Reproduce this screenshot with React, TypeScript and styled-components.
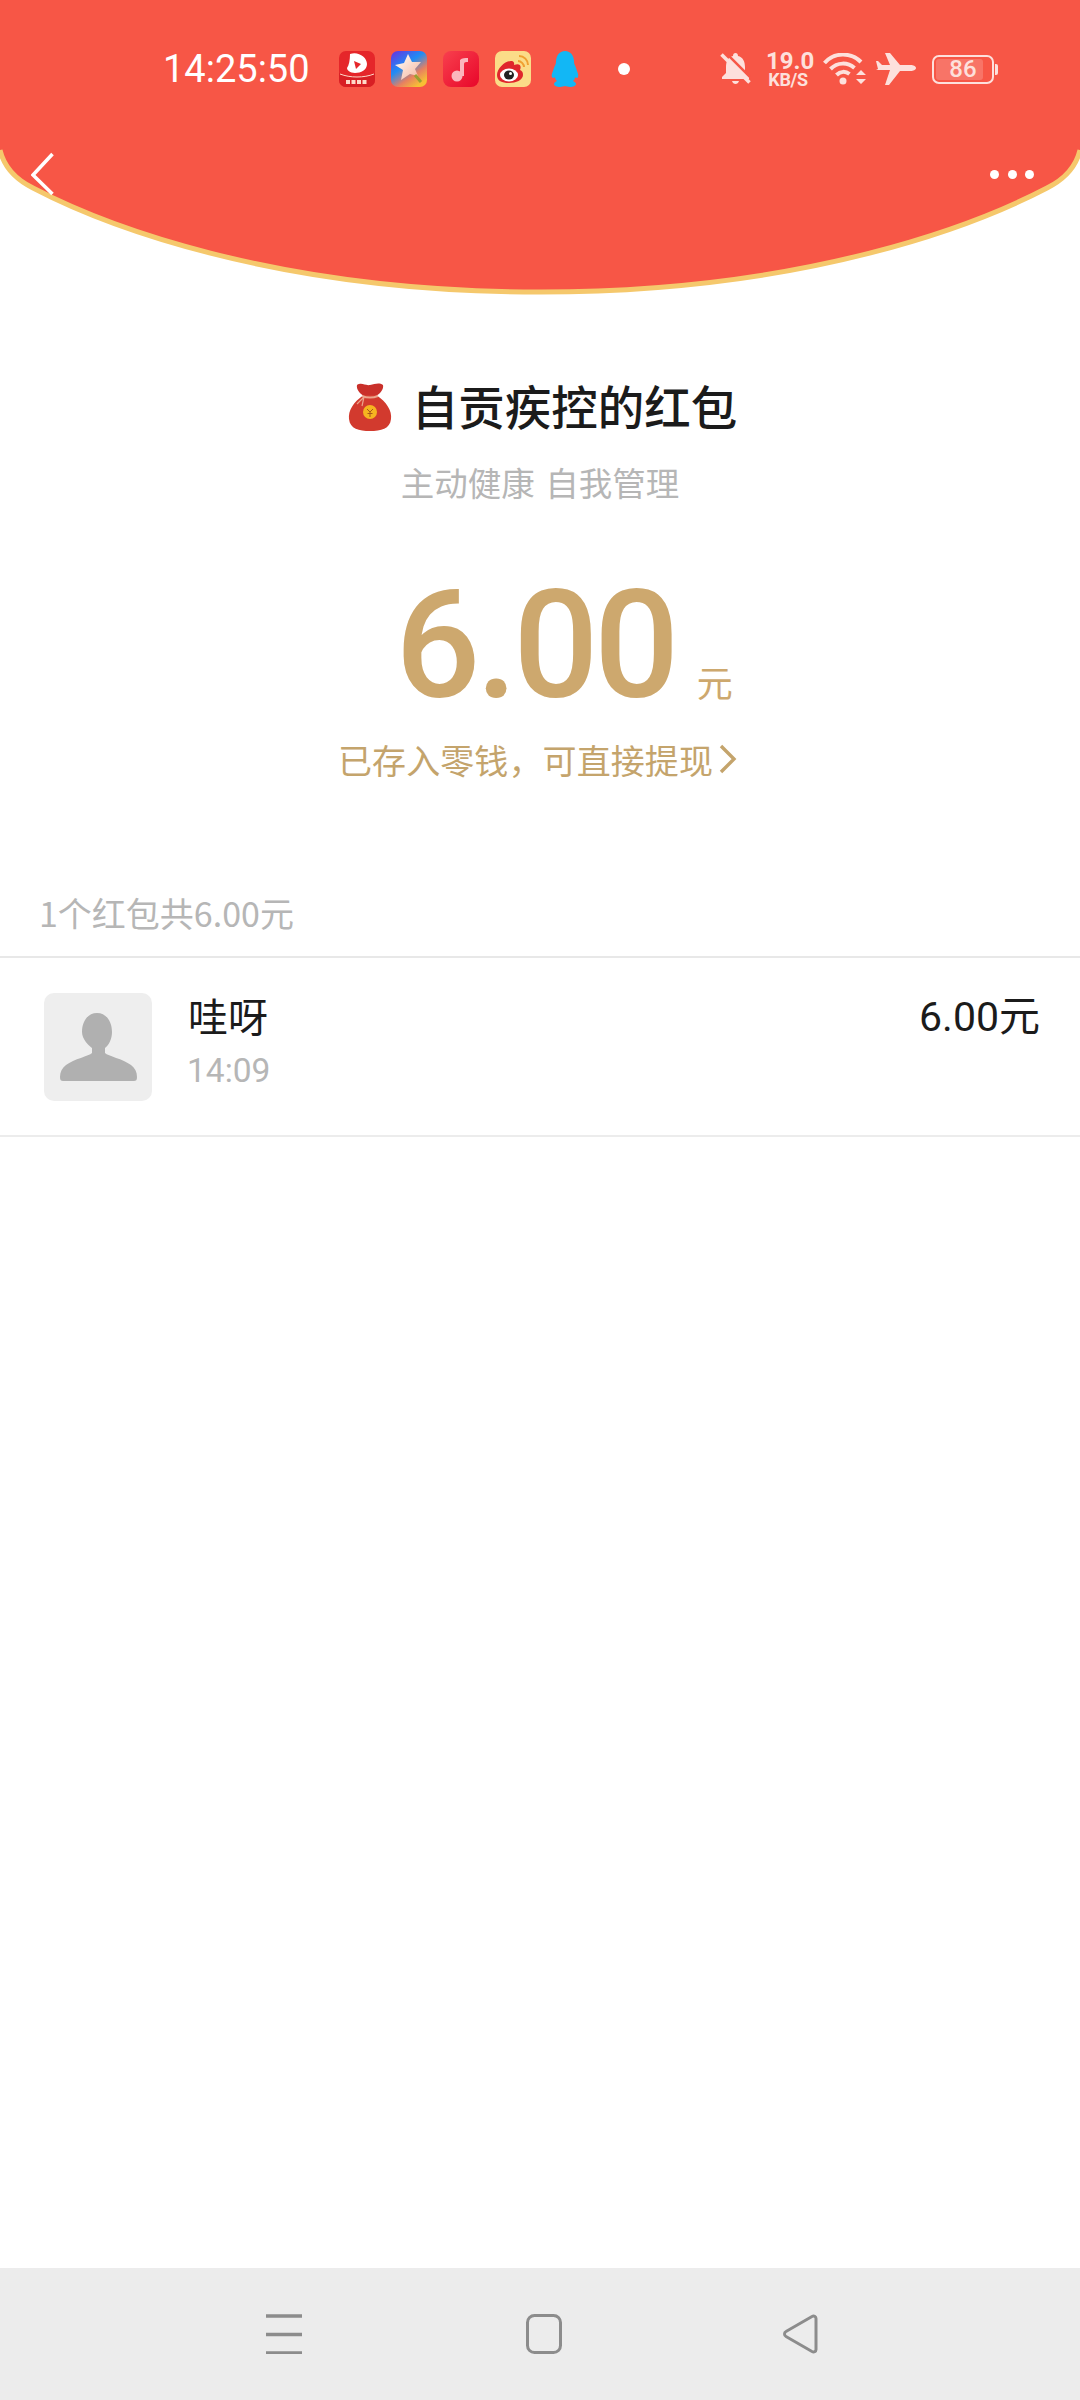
import React from "react";
import styled, { createGlobalStyle } from "styled-components";

const CJK = `"Noto Sans CJK SC", "Noto Sans", sans-serif`;
const NUM = `Roboto, "Noto Sans CJK SC", sans-serif`;

const Global = createGlobalStyle`
  html, body { margin: 0; padding: 0; background: #fff; }
  * { box-sizing: border-box; }
`;

const Page = styled.div`
  width: 1080px;
  height: 2400px;
  display: flex;
  flex-direction: column;
  overflow: hidden;
  font-family: ${CJK};
  background: #fff;
`;

const Header = styled.header`
  position: relative;
  height: 295px;
  flex: none;
`;

const HeaderShape = styled.svg`
  position: absolute;
  inset: 0;
  width: 1080px;
  height: 297px;
`;

const StatusBar = styled.div`
  position: relative;
  height: 138px;
  display: flex;
  align-items: center;
  padding-left: 163px;
`;

const Clock = styled.span`
  font: 400 38px/40px ${NUM};
  color: #fff;
  width: 176px;
  flex: none;
  white-space: nowrap;
`;

const AppIcons = styled.div`
  display: flex;
  align-items: center;
  gap: 16px;
  width: 381px;
  flex: none;
`;

const StatusIcons = styled.div`
  display: flex;
  align-items: center;
  color: #fde0dc;
`;

const Speed = styled.div`
  width: 44px;
  margin: 0 13px 0 15px;
  text-align: center;
  white-space: nowrap;
  font-family: ${NUM};
  font-weight: 700;
  font-size: 18px;
  line-height: 15px;
  letter-spacing: -0.3px;
  color: #fde0dc;
  &::first-line {
    font-size: 24px;
    line-height: 21px;
    letter-spacing: 0;
  }
`;

const Battery = styled.div`
  position: relative;
  width: 62px;
  height: 29px;
  margin-left: 16px;
  border: 2px solid #fde0dc;
  border-radius: 7px;
  display: flex;
  align-items: center;
  justify-content: center;
  font: 500 24px/25px ${NUM};
  color: #fde0dc;
  &::before {
    content: "";
    position: absolute;
    left: 2px;
    top: 2px;
    bottom: 2px;
    width: 47px;
    background: rgba(255, 255, 255, 0.18);
    border-radius: 3px;
  }
  &::after {
    content: "";
    position: absolute;
    right: -6px;
    top: 7px;
    width: 3px;
    height: 11px;
    background: #fde0dc;
    border-radius: 0 2px 2px 0;
  }
`;

const BatteryLevel = styled.span`
  position: relative;
`;

const NavRow = styled.div`
  position: relative;
  display: flex;
  justify-content: space-between;
  align-items: center;
  height: 60px;
  padding: 0 46px 0 31px;
  margin-top: 6px;
`;

const Dots = styled.div`
  display: flex;
  gap: 8.5px;
`;

const Dot = styled.i`
  display: block;
  width: 9px;
  height: 9px;
  border-radius: 50%;
  background: #fff;
`;

const Hero = styled.section`
  display: flex;
  flex-direction: column;
  align-items: center;
`;

const TitleRow = styled.div`
  height: 60px;
  margin-top: 80px;
  padding-left: 4px;
  display: flex;
  align-items: center;
  gap: 19px;
`;

const BagSlot = styled.span`
  display: flex;
  margin-top: 4px;
`;

const Title = styled.h1`
  margin: 0;
  font-size: 46.500px;
  line-height: 60px;
  font-weight: 500;
  color: #1b1b1b;
`;

const Subtitle = styled.p`
  margin: 22px 0 0;
  font-size: 33.500px;
  line-height: 50px;
  color: #b6b6b6;
  word-spacing: 3px;
`;

const AmountRow = styled.div`
  margin-top: 64px;
  padding-left: 48px;
  display: flex;
  align-items: baseline;
`;

const Amount = styled.span`
  font: 500 150px/150px ${NUM};
  letter-spacing: -4.500px;
  color: #cda86e;
`;

const AmountUnit = styled.span`
  margin-left: 22px;
  font-size: 36px;
  line-height: 40px;
  color: #cda86e;
`;

const Notice = styled.div`
  margin-top: 13px;
  height: 50px;
  padding-right: 5px;
  display: flex;
  align-items: center;
  gap: 6px;
  font-size: 34px;
  letter-spacing: 0.1px;
  color: #c4a46c;
`;

const SectionLabel = styled.div`
  margin-top: 104px;
  padding: 0 40px 18px 39px;
  border-bottom: 2px solid #e8e8e8;
  font-size: 34px;
  line-height: 50px;
  color: #b6b6b6;
`;

const Row = styled.div`
  display: flex;
  align-items: flex-start;
  padding: 35px 40px 34px 44px;
  border-bottom: 2px solid #ececec;
`;

const Avatar = styled.div`
  width: 108px;
  height: 108px;
  flex: none;
  border-radius: 10px;
  background: #eeeeee;
`;

const RowText = styled.div`
  flex: 1;
  margin-left: 36px;
`;

const Name = styled.div`
  margin-top: -3px;
  font-size: 40px;
  line-height: 50px;
  color: #1b1b1b;
`;

const Time = styled.div`
  margin-top: 6px;
  margin-left: -1px;
  font: 400 33.500px/50px ${NUM};
  color: #b6b6b6;
`;

const RowAmount = styled.div`
  margin-top: -1px;
  font: 400 41px/50px ${NUM};
  color: #1b1b1b;
`;

const Spacer = styled.div`
  flex: 1;
`;

const SystemBar = styled.nav`
  height: 132px;
  flex: none;
  background: #ececec;
  display: flex;
  align-items: center;
  padding: 0 262px 0 266px;
  justify-content: space-between;
`;

const HomeSlot = styled.span`
  display: flex;
  margin-left: 2px;
`;

const NoticeDot = styled.i`
  display: block;
  width: 12px;
  height: 12px;
  margin-left: 22px;
  border-radius: 50%;
  background: #fff;
`;

const BackIcon = () => (
  <svg width="24" height="44" viewBox="0 0 24 44" fill="none">
    <path d="M21.5 2 2 23 21.5 42" stroke="#fff" strokeWidth="3.500" />
  </svg>
);

const NewsIcon = () => (
  <svg width="36" height="36" viewBox="0 0 36 36">
    <rect width="36" height="36" rx="7" fill="#e5262a" />
    <path d="M0 22c10 5 26 5 36 0v7a7 7 0 0 1-7 7H7a7 7 0 0 1-7-7z" fill="#d81f24" />
    <path d="M1 23c10 4 24 4 34 0" stroke="#ffd9c8" strokeWidth="1" fill="none" />
    <path d="M11 3c8-3 17 3 17 10 0 6-6 9-12 9-5 0-8-3-8-5 2-3 3-8 3-14z" fill="#fff" />
    <path d="M15 10l7 3-5 5z" fill="#e5262a" />
    <path d="M7 31h22" stroke="#ffd9c8" strokeWidth="4" strokeDasharray="4 1.5" />
  </svg>
);

const StarIcon = () => (
  <svg width="36" height="36" viewBox="0 0 36 36">
    <defs>
      <linearGradient id="starBg" x1="0" y1="0" x2="0.7" y2="1">
        <stop offset="0" stopColor="#6a30e0" />
        <stop offset="0.45" stopColor="#1f8cf5" />
        <stop offset="0.75" stopColor="#e88060" />
        <stop offset="1" stopColor="#f7c034" />
      </linearGradient>
      <linearGradient id="starFill" x1="0" y1="0" x2="1" y2="1">
        <stop offset="0" stopColor="#fff" />
        <stop offset="1" stopColor="#f5b49a" />
      </linearGradient>
    </defs>
    <rect width="36" height="36" rx="7" fill="url(#starBg)" />
    <path d="M17 3l4 8 9 0-6 7 3 7-8-2-9 6 2-10-8-5 9-2z" fill="url(#starFill)" />
    <path d="M24 24l6 7" stroke="#9aa030" strokeWidth="3" />
  </svg>
);

const MusicIcon = () => (
  <svg width="36" height="36" viewBox="0 0 36 36">
    <defs>
      <linearGradient id="musicBg" x1="0" y1="0" x2="1" y2="1">
        <stop offset="0" stopColor="#f8404e" />
        <stop offset="1" stopColor="#e8062a" />
      </linearGradient>
    </defs>
    <rect width="36" height="36" rx="8" fill="url(#musicBg)" />
    <circle cx="14" cy="25" r="5.500" fill="#fbb6bd" />
    <path d="M17 25V9c2-2 5-2 8-2v4c-2 0-4 0-4 2v12z" fill="#fbb6bd" />
  </svg>
);

const WeiboIcon = () => (
  <svg width="36" height="36" viewBox="0 0 36 36">
    <rect width="36" height="36" rx="7" fill="#fbdc88" />
    <path d="M2 24c0-7 9-15 15-14 3 1 2 4 2 4 5-2 8 0 6 5 2 1 3 2 3 5 0 5-7 8-14 8S2 30 2 24z" fill="#e0262c" />
    <ellipse cx="14" cy="24" rx="9" ry="6.500" fill="#fff" />
    <ellipse cx="14" cy="24" rx="5" ry="4.500" fill="#222" />
    <circle cx="15.500" cy="22.500" r="1.500" fill="#fff" />
    <path d="M23 10c3 0 6 3 6 6M24 5c5 0 9 4 9 9" stroke="#f0a030" strokeWidth="2" fill="none" />
  </svg>
);

const QQIcon = () => (
  <svg width="33" height="36" viewBox="-3 0 33 36">
    <path
      d="M15 0c6 0 9 5 9 11 0 2 1 3 2 6 1 3 3 7 2 9-1 2-3 0-3 0 0 2-1 3-2 4 2 1 3 2 3 3 0 2-3 3-6 3-2 0-4-1-5-1s-3 1-5 1c-3 0-6-1-6-3 0-1 1-2 3-3-1-1-2-2-2-4 0 0-2 2-3 0-1-2 1-6 2-9 1-3 2-4 2-6C6 5 9 0 15 0z"
      fill="#12b7f5"
    />
  </svg>
);

const BellOffIcon = () => (
  <svg width="31" height="32" viewBox="0 0 31 32">
    <path
      d="M15.500 0c1.500 0 2.500 1 2.500 3 5 1 7 6 7 11v6l4 4v2H2v-2l4-4v-6c0-5 2-10 7-11 0-2 1-3 2.500-3zM12 28h7c-1 4-6 4-7 0z"
      fill="currentColor"
    />
    <path d="M5 -1l27 27" stroke="#f75646" strokeWidth="2.500" />
    <path d="M1.500 1.500l28 28" stroke="currentColor" strokeWidth="3.500" />
  </svg>
);

const WifiIcon = () => (
  <svg width="44" height="32" viewBox="0 0 44 32" fill="none" stroke="currentColor" strokeWidth="4">
    <path d="M1.500 10C11-1 28-1 38 9" />
    <path d="M7.500 16c7-7 17-7 24-1" />
    <path d="M13.500 22c4-4 9-4 13-1" />
    <circle cx="20" cy="28" r="3.500" fill="currentColor" stroke="none" />
    <path d="M38 17l-5 5h10zM38 31l-5-5h10z" fill="currentColor" stroke="none" />
  </svg>
);

const PlaneIcon = () => (
  <svg width="40" height="32" viewBox="0 0 40 32" style={{ marginLeft: 9 }}>
    <path
      d="M40 15c0-2-3-3-5-3H24L14 0h-5l5 12H6L2 8H0l2 8-2 0h2l-2 0 2 1h12L9 32h4l11-14h11c2 0 5-1 5-3z"
      fill="currentColor"
    />
  </svg>
);

const MoneyBag = () => (
  <svg width="46" height="50" viewBox="0 0 46 50">
    <path d="M10 3c5-3 8 1 13 0 5-1 9-3 13 0 1 4-3 9-7 11H17C13 12 9 7 10 3z" fill="#c9302a" />
    <path d="M17 13C6 20 1 29 2 37c1 10 10 12 21 12s20-2 21-12c1-8-4-17-15-24z" fill="#d23a2e" />
    <path d="M15 14c5 2 11 2 16 0" stroke="#eba58c" strokeWidth="2" fill="none" />
    <path d="M17 15l-7 7M17 15l-2 9" stroke="#eba58c" strokeWidth="1.200" fill="none" />
    <circle cx="23" cy="30" r="7" fill="#f6b420" />
    <path d="M20 27l3 3 3-3M23 30v5M20.500 31.500h5" stroke="#a8551c" strokeWidth="1" fill="none" />
  </svg>
);

const NoticeChevron = () => (
  <svg width="18" height="30" viewBox="0 0 18 30" fill="none">
    <path d="M2 2l13 13L2 28" stroke="#c4a46c" strokeWidth="3.400" />
  </svg>
);

const PersonIcon = () => (
  <svg width="108" height="108" viewBox="0 0 108 108">
    <path
      d="M53 20c9 0 15 8 15 19 0 7-3 13-7 16v5c3 3 18 6 26 12 4 3 6 7 6 12 0 3-1 4-3 4H19c-2 0-3-1-3-4 0-5 2-9 6-12 8-6 23-9 26-12v-5c-4-3-10-9-10-16 0-11 6-19 15-19z"
      fill="#b0b0b0"
    />
  </svg>
);

const MenuIcon = () => (
  <svg width="36" height="40" viewBox="0 0 36 40">
    <path d="M0 2h36M0 20.500h36M0 39h36" stroke="#8c8c8c" strokeWidth="3.400" />
  </svg>
);

const HomeIcon = () => (
  <svg width="36" height="40" viewBox="0 0 36 40" fill="none">
    <rect x="1.500" y="1.500" width="33" height="37" rx="7" stroke="#8c8c8c" strokeWidth="3" />
  </svg>
);

const TriangleIcon = () => (
  <svg width="35" height="40" viewBox="0 0 35 40" fill="none">
    <path d="M29 2.500c2-1 4 0 4 2v31c0 2-2 3-4 2L3 22.500c-2-1-2-4 0-5z" stroke="#8c8c8c" strokeWidth="3" />
  </svg>
);

const CURVE =
  "M0 150C4 167 15 179 33 188C100 223 270 292 540 292C810 292 980 223 1047 188C1065 179 1076 167 1080 150";

export default function App() {
  return (
    <Page>
      <Global />
      <Header>
        <HeaderShape viewBox="0 0 1080 297">
          <path d={`${CURVE}V0H0Z`} fill="#f75646" />
          <path d={CURVE} fill="none" stroke="#f5c86c" strokeWidth="5" />
        </HeaderShape>
        <StatusBar>
          <Clock>14:25:50</Clock>
          <AppIcons>
            <NewsIcon />
            <StarIcon />
            <MusicIcon />
            <WeiboIcon />
            <QQIcon />
            <NoticeDot />
          </AppIcons>
          <StatusIcons>
            <BellOffIcon />
            <Speed>
              19.0
              <br />
              KB/S
            </Speed>
            <WifiIcon />
            <PlaneIcon />
            <Battery>
              <BatteryLevel>86</BatteryLevel>
            </Battery>
          </StatusIcons>
        </StatusBar>
        <NavRow>
          <BackIcon />
          <Dots>
            <Dot />
            <Dot />
            <Dot />
          </Dots>
        </NavRow>
      </Header>
      <Hero>
        <TitleRow>
          <BagSlot>
            <MoneyBag />
          </BagSlot>
          <Title>自贡疾控的红包</Title>
        </TitleRow>
        <Subtitle>主动健康 自我管理</Subtitle>
        <AmountRow>
          <Amount>6.00</Amount>
          <AmountUnit>元</AmountUnit>
        </AmountRow>
        <Notice>
          已存入零钱，可直接提现
          <NoticeChevron />
        </Notice>
      </Hero>
      <SectionLabel>1个红包共6.00元</SectionLabel>
      <Row>
        <Avatar>
          <PersonIcon />
        </Avatar>
        <RowText>
          <Name>哇呀</Name>
          <Time>14:09</Time>
        </RowText>
        <RowAmount>6.00元</RowAmount>
      </Row>
      <Spacer />
      <SystemBar>
        <MenuIcon />
        <HomeSlot>
          <HomeIcon />
        </HomeSlot>
        <TriangleIcon />
      </SystemBar>
    </Page>
  );
}
